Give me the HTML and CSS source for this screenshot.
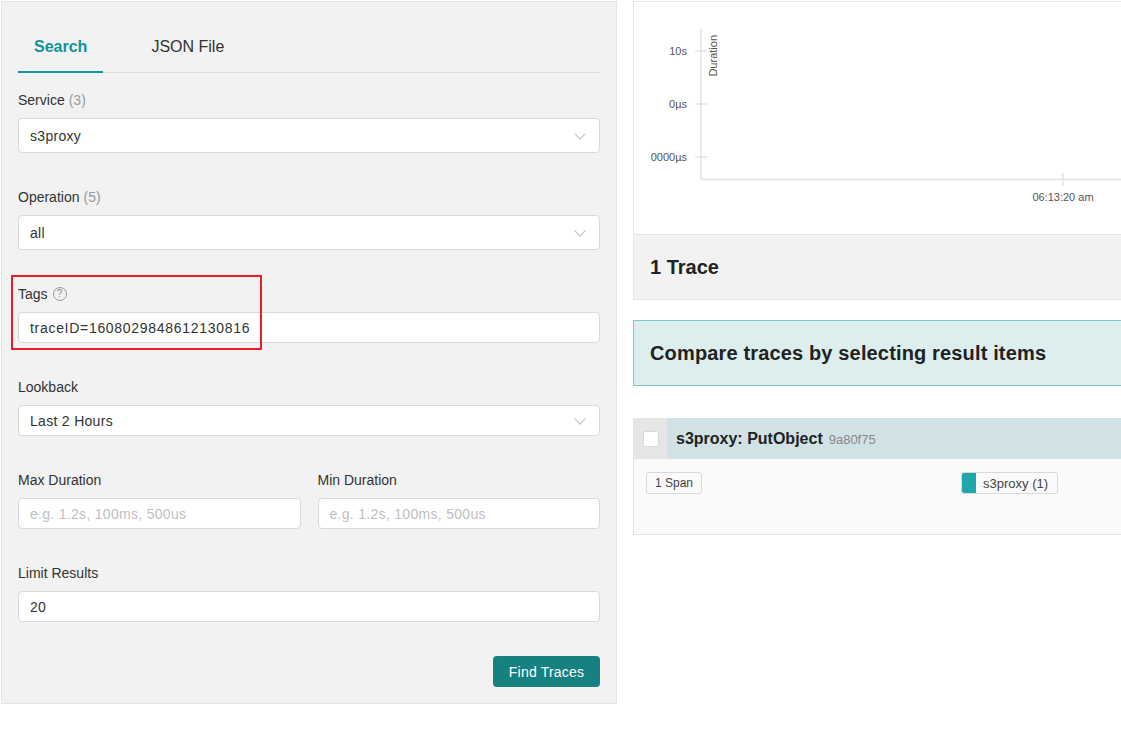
FILE: index.html
```html
<!DOCTYPE html>
<html lang="en">
<head>
<meta charset="utf-8">
<title>Jaeger Search</title>
<link rel="stylesheet" href="styles.css">
</head>
<body>
<div class="page">
  <aside class="search-panel">
    <div class="tabs">
      <div class="tab active">Search</div>
      <div class="tab">JSON File</div>
    </div>

    <div class="form-item">
      <div class="label">Service <span class="count">(3)</span></div>
      <div class="select tall"><span>s3proxy</span><span class="chev"></span></div>
    </div>

    <div class="form-item">
      <div class="label">Operation <span class="count">(5)</span></div>
      <div class="select tall"><span>all</span><span class="chev"></span></div>
    </div>

    <div class="form-item tags-item">
      <div class="label">Tags <span class="help">?</span></div>
      <div class="input"><span class="wide">traceID=1608029848612130816</span></div>
      <div class="highlight"></div>
    </div>

    <div class="form-item">
      <div class="label">Lookback</div>
      <div class="select"><span>Last 2 Hours</span><span class="chev"></span></div>
    </div>

    <div class="form-row">
      <div class="form-item">
        <div class="label">Max Duration</div>
        <div class="input"><span class="placeholder">e.g. 1.2s, 100ms, 500us</span></div>
      </div>
      <div class="form-item">
        <div class="label">Min Duration</div>
        <div class="input"><span class="placeholder">e.g. 1.2s, 100ms, 500us</span></div>
      </div>
    </div>

    <div class="form-item">
      <div class="label">Limit Results</div>
      <div class="input"><span>20</span></div>
    </div>

    <div class="actions">
      <button class="btn-primary" type="button">Find Traces</button>
    </div>
  </aside>

  <main class="results">
    <section class="card">
      <div class="chart">
        <svg width="560" height="232" viewBox="0 0 560 232" xmlns="http://www.w3.org/2000/svg">
          <g stroke="#e2e2e2" stroke-width="1.5" fill="none">
            <line x1="67" y1="27" x2="67" y2="177.5"/>
            <line x1="67" y1="177.5" x2="560" y2="177.5"/>
            <line x1="61" y1="49" x2="73" y2="49"/>
            <line x1="61" y1="102" x2="73" y2="102"/>
            <line x1="61" y1="155" x2="73" y2="155"/>
            <line x1="429" y1="171" x2="429" y2="184"/>
          </g>
          <g font-family="Liberation Sans, Arial, sans-serif" font-size="11" fill="#555">
            <text x="53" y="53" text-anchor="end">10s</text>
            <text x="53" y="106" text-anchor="end">0µs</text>
            <text x="53" y="159" text-anchor="end">0000µs</text>
            <text x="429" y="199" text-anchor="middle">06:13:20 am</text>
            <text transform="translate(83 33) rotate(-90)" text-anchor="end">Duration</text>
          </g>
        </svg>
      </div>
      <div class="trace-count">1 Trace</div>
    </section>

    <section class="compare">Compare traces by selecting result items</section>

    <section class="trace-item">
      <div class="trace-head">
        <div class="check-cell"><span class="checkbox"></span></div>
        <div class="trace-title">s3proxy: PutObject <span class="trace-id">9a80f75</span></div>
      </div>
      <div class="trace-body">
        <span class="tag">1 Span</span>
        <span class="tag service-tag"><span class="swatch"></span>s3proxy (1)</span>
      </div>
    </section>
  </main>
</div>
</body>
</html>
```

FILE: styles.css
```css
html, body {
  margin: 0;
  padding: 0;
  background: #fff;
  overflow: hidden;
}

body {
  font-family: "Liberation Sans", Arial, sans-serif;
  color: #333;
  font-size: 14px;
}

.page {
  display: flex;
  align-items: flex-start;
  gap: 16px;
  padding: 1px 0 0 1px;
  width: 1300px;
}

/* ---------- search panel ---------- */
.search-panel {
  box-sizing: border-box;
  width: 616px;
  flex: 0 0 616px;
  background: #f2f2f2;
  border: 1px solid #e4e4e4;
  padding: 24px 16px 16px 16px;
}

.tabs {
  display: flex;
  gap: 32px;
  border-bottom: 1px solid #e0e0e0;
  margin-bottom: 17px;
}

.tab {
  padding: 10px 16px 13px;
  font-size: 16px;
  line-height: 22px;
  color: #333;
  border-bottom: 2px solid transparent;
  margin-bottom: -1px;
}

.tab.active {
  color: #11939a;
  font-weight: bold;
  border-bottom-color: #11939a;
}

.form-item {
  position: relative;
  margin-bottom: 34px;
}

.label {
  line-height: 20px;
  font-size: 14px;
  color: #333;
  margin-bottom: 8px;
  display: flex;
  align-items: center;
  gap: 4px;
}

.count {
  color: #999;
}

.help {
  box-sizing: border-box;
  width: 14px;
  height: 14px;
  border: 1px solid #999;
  border-radius: 50%;
  color: #888;
  font-size: 10px;
  line-height: 12px;
  text-align: center;
  margin-left: 1px;
}

.select, .input {
  box-sizing: border-box;
  height: 31px;
  background: #fff;
  border: 1px solid #d9d9d9;
  border-radius: 4px;
  padding: 0 11px;
  display: flex;
  align-items: center;
  justify-content: space-between;
  color: #333;
  font-size: 14px;
  letter-spacing: 0.3px;
}

.select.tall {
  height: 35px;
}

.wide {
  letter-spacing: 0.7px;
}

.placeholder {
  color: #bfbfbf;
}

.chev {
  width: 7px;
  height: 7px;
  border-right: 1px solid #bfbfbf;
  border-bottom: 1px solid #bfbfbf;
  transform: rotate(45deg);
  margin: -4px 4px 0 0;
}

.highlight {
  position: absolute;
  left: -7px;
  top: -9px;
  width: 251px;
  height: 75px;
  box-sizing: border-box;
  border: 2px solid #ee1c25;
}

.form-row {
  display: grid;
  grid-template-columns: 1fr 1fr;
  gap: 17px;
}

.actions {
  display: flex;
  justify-content: flex-end;
}

.btn-primary {
  box-sizing: border-box;
  height: 31px;
  width: 107px;
  border: none;
  border-radius: 4px;
  background: #168180;
  color: #fff;
  font-family: inherit;
  font-size: 14px;
  letter-spacing: 0.2px;
  padding: 0;
}

/* ---------- results ---------- */
.results {
  flex: 0 0 600px;
  display: flex;
  flex-direction: column;
}

.card {
  border: 1px solid #e6e6e6;
  background: #fff;
}

.chart {
  height: 232px;
}

.chart svg {
  display: block;
}

.trace-count {
  box-sizing: border-box;
  height: 65px;
  border-top: 1px solid #e6e6e6;
  background: #f2f2f2;
  padding-left: 16px;
  display: flex;
  align-items: center;
  font-size: 20px;
  font-weight: bold;
  color: #222;
}

.compare {
  box-sizing: border-box;
  margin-top: 20px;
  height: 66px;
  background: #ddeeee;
  border: 1px solid #7fc6c6;
  padding-left: 16px;
  display: flex;
  align-items: center;
  font-size: 20px;
  font-weight: bold;
  color: #222;
  letter-spacing: 0.15px;
}

.trace-item {
  margin-top: 32px;
  border: 1px solid #e3e3e3;
  border-top: none;
}

.trace-head {
  display: flex;
  height: 41px;
  background: #d1e2e6;
}

.check-cell {
  width: 33px;
  background: #e6e6e6;
  display: flex;
  align-items: center;
  justify-content: center;
}

.checkbox {
  box-sizing: border-box;
  width: 16px;
  height: 16px;
  background: #fff;
  border: 1px solid #d9d9d9;
  border-radius: 2px;
}

.trace-title {
  display: flex;
  align-items: baseline;
  gap: 6px;
  padding: 12px 0 0 9px;
  font-size: 16px;
  font-weight: bold;
  color: #222;
}

.trace-id {
  font-size: 13px;
  font-weight: normal;
  color: #888;
}

.trace-body {
  box-sizing: border-box;
  height: 75px;
  background: #fafafa;
  display: grid;
  grid-template-columns: 315px auto;
  justify-content: start;
  align-items: start;
  padding: 13px 0 0 12px;
}

.tag {
  box-sizing: border-box;
  height: 22px;
  border: 1px solid #d9d9d9;
  border-radius: 3px;
  background: #fafafa;
  font-size: 12px;
  color: #444;
  display: inline-flex;
  align-items: center;
  padding: 0 8px;
  justify-self: start;
}

.service-tag {
  font-size: 13px;
  padding: 0 9px 0 0;
  overflow: hidden;
}

.swatch {
  align-self: stretch;
  width: 15px;
  background: #1fa7aa;
  margin: -1px 7px -1px -1px;
}
```
